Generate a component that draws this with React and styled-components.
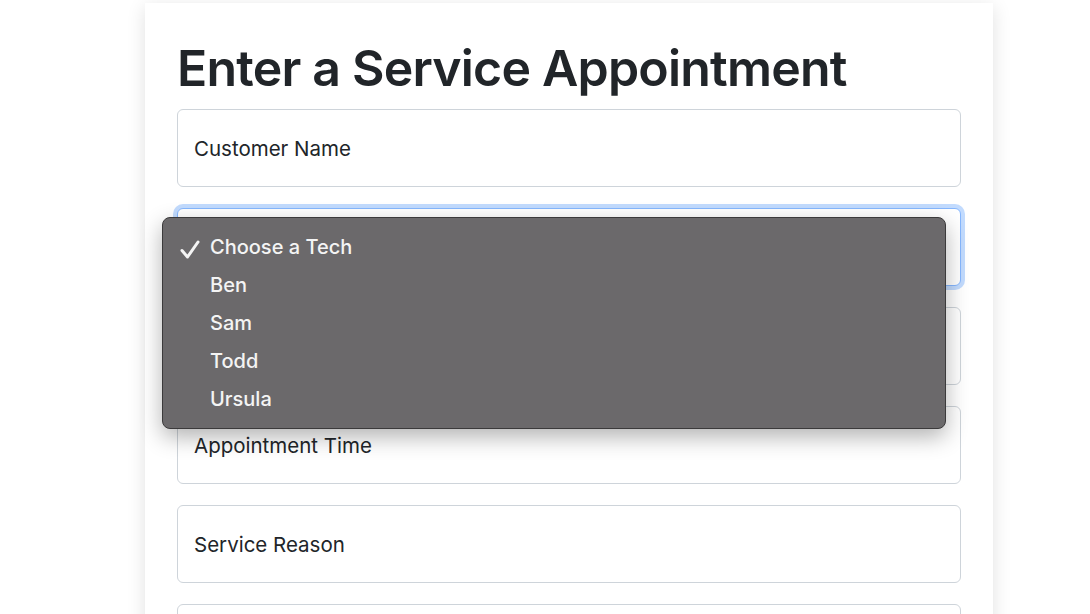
import React from "react";
import styled, { createGlobalStyle } from "styled-components";

const GlobalStyle = createGlobalStyle`
  html, body {
    margin: 0;
    padding: 0;
    background: #ffffff;
    font-family: Inter, "Noto Sans", "Liberation Sans", sans-serif;
    color: #212529;
    overflow: hidden;
  }
`;

const techs = ["Choose a Tech", "Ben", "Sam", "Todd", "Ursula"];

const CheckMark = () => (
  <svg width="20" height="19" viewBox="0 0 20 19">
    <polyline
      points="2,10.5 7.5,17 18,2"
      fill="none"
      stroke="#f4f4f4"
      strokeWidth="3"
      strokeLinecap="round"
      strokeLinejoin="round"
    />
  </svg>
);

const App = () => {
  return (
    <S.page>
      <GlobalStyle />
      <S.card>
        <S.title>Enter a Service Appointment</S.title>
        <S.form>
          <S.field>Customer Name</S.field>
          <S.selectWrap>
            <S.field focused>Choose a Tech</S.field>
            <S.menu>
              {techs.map((t, i) => (
                <S.option key={t}>
                  <S.check>{i === 0 && <CheckMark />}</S.check>
                  {t}
                </S.option>
              ))}
            </S.menu>
          </S.selectWrap>
          <S.field>Appointment Date</S.field>
          <S.field>Appointment Time</S.field>
          <S.field>Service Reason</S.field>
          <S.field>VIN</S.field>
        </S.form>
      </S.card>
    </S.page>
  );
};

const S = {
  page: styled.div`
    height: 614px;
    padding: 3px 0 0 145px;
    box-sizing: border-box;
  `,
  card: styled.div`
    width: 848px;
    min-height: 700px;
    box-sizing: border-box;
    padding: 35px 32px 30px;
    background: #fff;
    box-shadow: 0 4px 18px rgba(0, 0, 0, 0.12);
  `,
  title: styled.h1`
    margin: 0 0 11px;
    font-size: 50px;
    font-weight: 560;
    letter-spacing: -0.8px;
    line-height: 60px;
    color: #212529;
  `,
  form: styled.div`
    display: flex;
    flex-direction: column;
    gap: 21px;
  `,
  selectWrap: styled.div`
    position: relative;
  `,
  field: styled.div`
    height: 78px;
    box-sizing: border-box;
    display: flex;
    align-items: center;
    padding: 0 16px;
    border: 1px solid ${(p) => (p.focused ? "#86b7fe" : "#ced4da")};
    border-radius: 6px;
    box-shadow: ${(p) =>
      p.focused ? "0 0 0 4px rgba(13, 110, 253, 0.25)" : "none"};
    font-size: 20.5px;
    color: #212529;
    background: #fff;
  `,
  menu: styled.div`
    position: absolute;
    left: -15px;
    top: 9px;
    width: 784px;
    box-sizing: border-box;
    padding: 10px 0 10px;
    background: #6b696b;
    border: 1px solid #3b3a3b;
    border-radius: 8px;
    box-shadow: 0 8px 22px rgba(0, 0, 0, 0.3);
    z-index: 10;
  `,
  option: styled.div`
    height: 38px;
    display: flex;
    align-items: center;
    font-size: 20px;
    font-weight: 500;
    color: #f4f4f4;
  `,
  check: styled.span`
    width: 47px;
    padding-left: 17px;
    padding-top: 4px;
    box-sizing: border-box;
    display: flex;
    align-items: center;
  `,
};

export default App;
